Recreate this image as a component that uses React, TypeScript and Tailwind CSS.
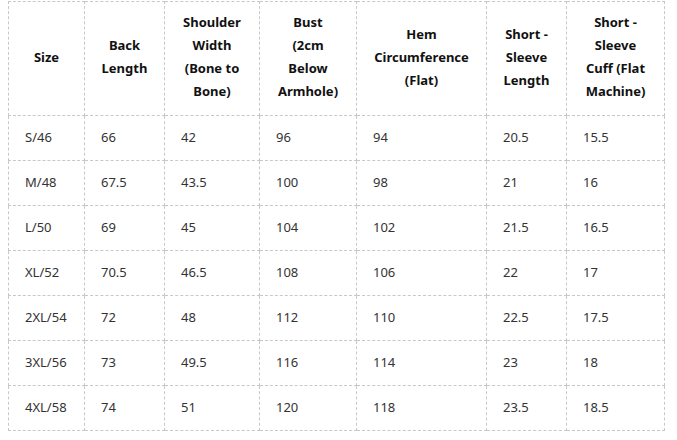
const headers = [
  ["Size"],
  ["Back", "Length"],
  ["Shoulder", "Width", "(Bone to", "Bone)"],
  ["Bust", "(2cm", "Below", "Armhole)"],
  ["Hem", "Circumference", "(Flat)"],
  ["Short -", "Sleeve", "Length"],
  ["Short -", "Sleeve", "Cuff (Flat", "Machine)"],
];

const widths = ["w-[76px]", "w-[80px]", "w-[95px]", "w-[97px]", "w-[130px]", "w-[80px]", "w-[98px]"];

const rows = [
  ["S/46", "66", "42", "96", "94", "20.5", "15.5"],
  ["M/48", "67.5", "43.5", "100", "98", "21", "16"],
  ["L/50", "69", "45", "104", "102", "21.5", "16.5"],
  ["XL/52", "70.5", "46.5", "108", "106", "22", "17"],
  ["2XL/54", "72", "48", "112", "110", "22.5", "17.5"],
  ["3XL/56", "73", "49.5", "116", "114", "23", "18"],
  ["4XL/58", "74", "51", "120", "118", "23.5", "18.5"],
];

export default function App() {
  return (
    <div className="w-[677px] h-[440px] bg-white pt-px pl-2 font-['Noto_Sans',sans-serif]">
      <table className="border-collapse table-fixed w-[656px]">
        <thead>
          <tr className="h-[114px]">
            {headers.map((h, i) => (
              <th
                key={i}
                className={`${widths[i]} border border-dashed border-[#c8c8c8] px-1 pb-[3px] text-center text-[13px] leading-[23px] font-bold text-[#111]`}
              >
                {h.map((line) => (
                  <div key={line} className="whitespace-nowrap">
                    {line}
                  </div>
                ))}
              </th>
            ))}
          </tr>
        </thead>
        <tbody>
          {rows.map((r) => (
            <tr key={r[0]} className="h-[45px]">
              {r.map((c, i) => (
                <td
                  key={i}
                  className="border border-dashed border-[#c8c8c8] pl-4 text-left text-[13px] text-[#333]"
                >
                  {c}
                </td>
              ))}
            </tr>
          ))}
        </tbody>
      </table>
    </div>
  );
}
